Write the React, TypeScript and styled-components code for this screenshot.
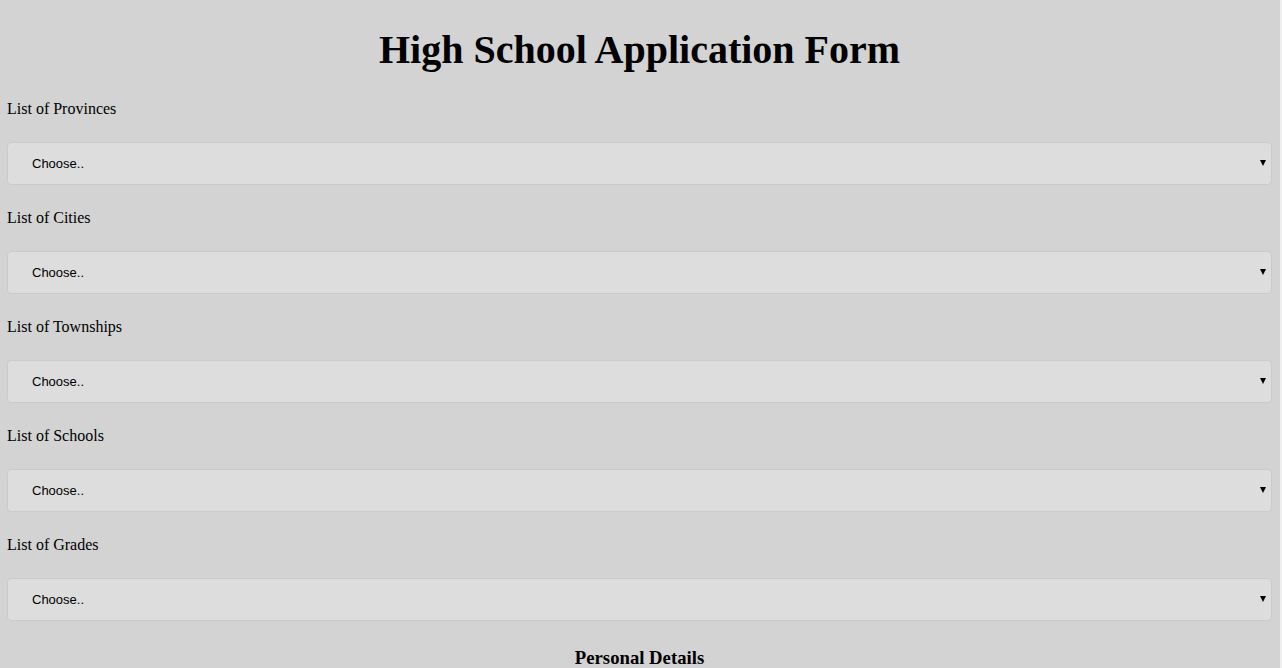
import React from 'react'
import styled, { createGlobalStyle } from 'styled-components'

const GlobalStyle = createGlobalStyle`
    html {
        background-color: #efefef;
    }
    body {
        margin: 0;
        font-family: 'Liberation Serif', 'Times New Roman', serif;
    }
`

export const Page = styled.div`
    width: 1280px;
    min-height: 100vh;
    box-sizing: border-box;
    padding: 0 8px 40px 7px;
    background-color: #d3d3d3;
    overflow: hidden;
`

export const Title = styled.h1`
    margin: 26px 0 27px 0;
    text-align: center;
    font-size: 40px;
    font-weight: bold;
    color: #000;
`

export const Field = styled.div`
    display: flex;
    flex-direction: column;
    margin-bottom: 24px;
`

export const Label = styled.label`
    font-size: 16px;
    line-height: 18px;
    color: #000;
    margin-bottom: 24px;
`

export const SelectWrap = styled.div`
    position: relative;
`

export const Select = styled.select`
    appearance: none;
    -webkit-appearance: none;
    width: 100%;
    height: 43px;
    box-sizing: border-box;
    padding: 0 24px;
    border: 1px solid #cacaca;
    border-radius: 4px;
    background-color: #dddddd;
    font-family: 'Liberation Sans', Arial, sans-serif;
    font-size: 13px;
    color: #000;
    outline: none;
`

export const Arrow = styled.span`
    position: absolute;
    right: 6px;
    top: 18px;
    width: 0;
    height: 0;
    border-left: 3.5px solid transparent;
    border-right: 3.5px solid transparent;
    border-top: 6px solid #000;
    pointer-events: none;
`

export const SectionTitle = styled.h3`
    margin: 26px 0 0 0;
    text-align: center;
    font-size: 18.72px;
    font-weight: bold;
    color: #000;
`

const lists = ['Provinces', 'Cities', 'Townships', 'Schools', 'Grades']

export default function App() {
    return (
        <>
            <GlobalStyle />
            <Page>
                <Title>High School Application Form</Title>
                {lists.map((name) => (
                    <Field key={name}>
                        <Label>List of {name}</Label>
                        <SelectWrap>
                            <Select defaultValue="">
                                <option value="">Choose..</option>
                            </Select>
                            <Arrow />
                        </SelectWrap>
                    </Field>
                ))}
                <SectionTitle>Personal Details</SectionTitle>
            </Page>
        </>
    )
}
